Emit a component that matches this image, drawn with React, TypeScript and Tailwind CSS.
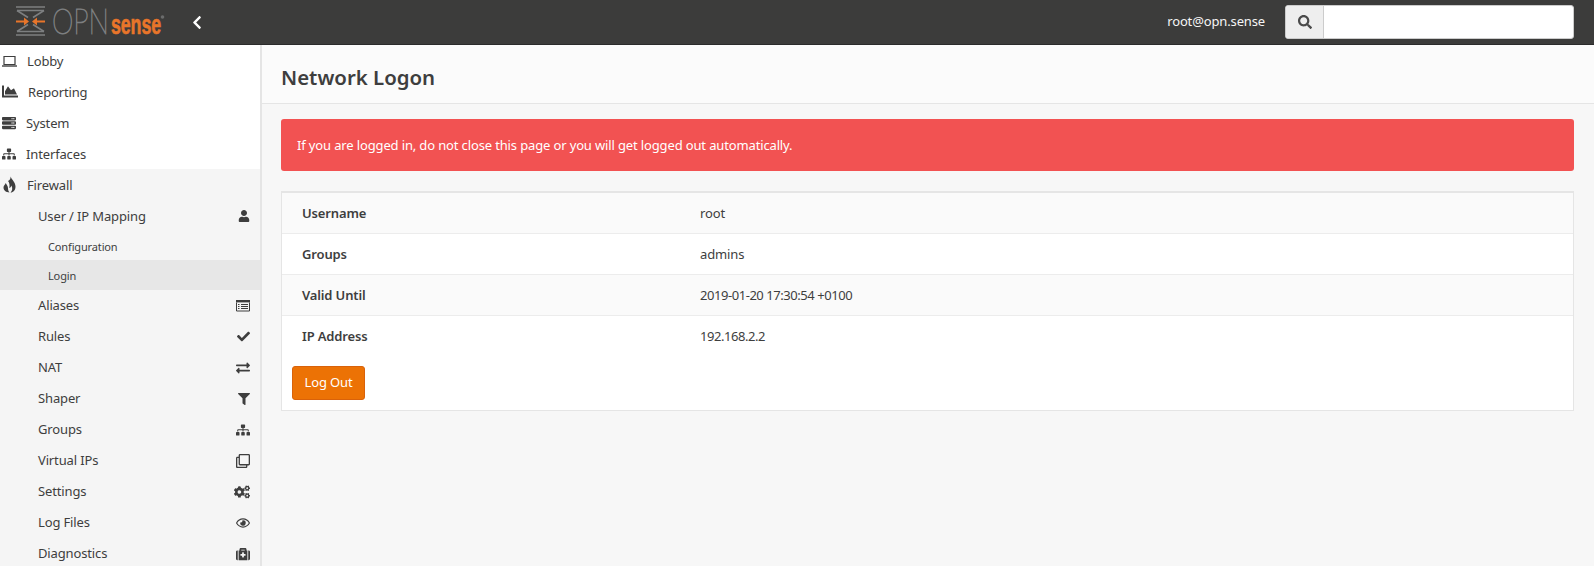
import type { ReactNode } from 'react';
import {
  FaChartArea,
  FaCheck,
  FaChevronLeft,
  FaCogs,
  FaExchangeAlt,
  FaFilter,
  FaMedkit,
  FaRegClone,
  FaRegEye,
  FaSearch,
  FaServer,
  FaSitemap,
  FaUser,
} from 'react-icons/fa';

function LaptopIcon() {
  return (
    <svg className="w-[15px] h-[16px]" viewBox="0 0 15 16" fill="none" stroke="currentColor">
      <path d="M2 3.5h11v8h-11z" strokeWidth="1.2" />
      <path d="M0 13h15" strokeWidth="1.4" />
    </svg>
  );
}

function FireIcon() {
  return (
    <svg className="w-[13px] h-[17px]" viewBox="0 0 13 17" fill="currentColor">
      <path d="M7.5 0.5C8.5 3.5 12.5 6 12.5 10.5C12.5 14 10.5 16.5 7.5 16.5C9.5 14.5 9.8 12 8.3 9.5C8 11 7.2 11.6 6.3 12C6.9 9 6.4 6.5 5 5C6.8 4 7.8 2.5 7.5 0.5Z" />
      <path d="M2.8 7C3.2 8.5 5 9.6 5 12C5 13.8 5.4 15.4 6.5 16.5C3 16.5 0.5 14.6 0.5 11.6C0.5 9.6 2 8.8 2.8 7Z" />
    </svg>
  );
}

function ListAltIcon() {
  return (
    <svg className="w-[14px] h-[12px]" viewBox="0 0 14 12" fill="none" stroke="currentColor">
      <path d="M0.5 2.5v8.5h13v-8.5" strokeWidth="1" />
      <path d="M0 1.2h14" strokeWidth="2.4" />
      <path d="M2 4.5h1.5M5 4.5h7M2 6.5h1.5M5 6.5h7M2 8.5h1.5M5 8.5h7" strokeWidth="1" />
    </svg>
  );
}

const TOP_ITEMS = [
  { label: 'Lobby', icon: <LaptopIcon /> },
  { label: 'Reporting', icon: <FaChartArea className="w-[16px] h-[17px]" /> },
  { label: 'System', icon: <FaServer className="w-[14px] h-[14px]" /> },
  { label: 'Interfaces', icon: <FaSitemap className="w-[14px] h-[14px]" /> },
];

const FIREWALL_ITEMS: { label: string; icon: ReactNode }[] = [
  { label: 'Aliases', icon: <ListAltIcon /> },
  { label: 'Rules', icon: <FaCheck className="w-[13px] h-[13px]" /> },
  { label: 'NAT', icon: <FaExchangeAlt className="w-[14px] h-[14px]" /> },
  { label: 'Shaper', icon: <FaFilter className="w-[12px] h-[12px]" /> },
  { label: 'Groups', icon: <FaSitemap className="w-[14px] h-[14px]" /> },
  { label: 'Virtual IPs', icon: <FaRegClone className="w-[14px] h-[14px]" /> },
  { label: 'Settings', icon: <FaCogs className="w-[16px] h-[16px]" /> },
  { label: 'Log Files', icon: <FaRegEye className="w-[14px] h-[14px]" /> },
  { label: 'Diagnostics', icon: <FaMedkit className="w-[14px] h-[14px]" /> },
];

const ROWS = [
  { label: 'Username', value: 'root', numeric: false },
  { label: 'Groups', value: 'admins', numeric: false },
  { label: 'Valid Until', value: '2019-01-20 17:30:54 +0100', numeric: true },
  { label: 'IP Address', value: '192.168.2.2', numeric: true },
];

function Logo() {
  return (
    <svg className="w-[155px] h-[40px] shrink-0" viewBox="0 0 155 40" fill="none">
      <g stroke="#7d7f80" strokeWidth="1.6">
        <path d="M0 5h29M1 8.5h27M1 29.5h27M0 33h29" />
        <path d="M1 8.5l11 7M28 8.5l-11 7M1 29.5l11-7M28 29.5l-11-7" />
      </g>
      <g stroke="#e8752a" strokeWidth="2.2">
        <path d="M0 19.5h10M29 19.5h-10" />
      </g>
      <path d="M8 15.5l5 4-5 4zM21 15.5l-5 4 5 4z" fill="#e8752a" />
      <text
        transform="translate(36 32) scale(0.78 1)"
        className="font-['Lato',sans-serif] font-thin text-[35px]"
        fill="#7d7f80"
        stroke="#7d7f80"
        strokeWidth="1"
      >
        OPN
      </text>
      <text
        transform="translate(95 32) scale(0.66 1)"
        className="font-['Liberation_Sans',sans-serif] font-bold text-[27px]"
        fill="#e8752a"
        stroke="#e8752a"
        strokeWidth="0.6"
      >
        sense
      </text>
      <circle cx="146.5" cy="15" r="1.8" fill="#6b6c6c" />
    </svg>
  );
}

export default function App() {
  return (
    <div className="h-screen overflow-hidden flex flex-col bg-[#f7f7f7] text-[13px] tracking-[-0.14px] text-[#3e3e3e] font-['Noto_Sans',sans-serif]">
      <header className="h-[45px] shrink-0 flex items-center bg-[#3c3c3b] border-b border-[#2b2b2b] pl-[16px] pr-[20px]">
        <Logo />
        <FaChevronLeft className="w-[12px] h-[15px] ml-[20px] text-white" />
        <span className="ml-auto text-[#f5f5f5]">root@opn.sense</span>
        <div className="ml-[20px] flex h-[34px] w-[289px] rounded-[3px] bg-white border border-[#cccccc] overflow-hidden">
          <span className="w-[38px] flex items-center justify-center bg-[#eeeeee] border-r border-[#cccccc]">
            <FaSearch className="w-[14px] h-[14px] text-[#4a4a4a]" />
          </span>
        </div>
      </header>

      <div className="flex flex-1 min-h-0">
        <nav className="w-[262px] shrink-0 bg-white border-r-2 border-[#e5e5e5]">
          {TOP_ITEMS.map((item) => (
            <div key={item.label} className="h-[31px] flex items-center gap-[10px] pl-[2px]">
              {item.icon}
              <span className="pt-[2px]">{item.label}</span>
            </div>
          ))}
          <div className="bg-[#f5f5f5]">
            <div className="h-[31px] flex items-center gap-[11px] pl-[3px]">
              <FireIcon />
              <span className="pt-[2px]">Firewall</span>
            </div>
            <div className="h-[31px] flex items-center justify-between pl-[38px] pr-[10px]">
              <span className="pt-[2px]">User / IP Mapping</span>
              <FaUser className="w-[12px] h-[12px]" />
            </div>
            <div className="h-[29px] flex items-center pl-[48px] pt-[4px] text-[11px]">Configuration</div>
            <div className="h-[30px] flex items-center pl-[48px] pt-[2px] text-[11px] bg-[#e7e7e7]">Login</div>
            {FIREWALL_ITEMS.map((item) => (
              <div key={item.label} className="h-[31px] flex items-center justify-between pl-[38px] pr-[10px]">
                <span>{item.label}</span>
                {item.icon}
              </div>
            ))}
          </div>
        </nav>

        <main className="flex-1 min-w-0">
          <div className="h-[59px] flex items-center pl-[19px] pt-[7px] bg-[#fbfbfb] border-b border-[#e5e5e5]">
            <h1 className="text-[20.4px] font-semibold tracking-[0px]">Network Logon</h1>
          </div>
          <div className="pt-[15px] pl-[19px] pr-[20px]">
            <div className="h-[52px] flex items-center pl-[16px] pt-[2px] rounded-[3px] bg-[#f25252] text-white">
              If you are logged in, do not close this page or you will get logged out automatically.
            </div>
            <div className="mt-[20px] bg-white border-2 border-[#e5e5e5] border-b-[1px] border-r-[1px] border-l-[1px]">
              {ROWS.map((row, index) => (
                <div
                  key={row.label}
                  className={`h-[41px] flex items-center border-b border-[#ececec] ${index % 2 === 0 ? 'bg-[#fafafa]' : 'bg-white'} ${index === 3 ? 'border-b-0' : 'pt-[2px]'}`}
                >
                  <span className="w-[418px] pl-[20px] font-semibold">{row.label}</span>
                  <span className={row.numeric ? 'tracking-[-0.45px]' : ''}>{row.value}</span>
                </div>
              ))}
              <div className="pl-[10px] pt-[9px] pb-[10px]">
                <button className="h-[34px] w-[73px] rounded-[3px] bg-[#ec7205] border border-[#d9620a] text-white">
                  Log Out
                </button>
              </div>
            </div>
          </div>
        </main>
      </div>
    </div>
  );
}
